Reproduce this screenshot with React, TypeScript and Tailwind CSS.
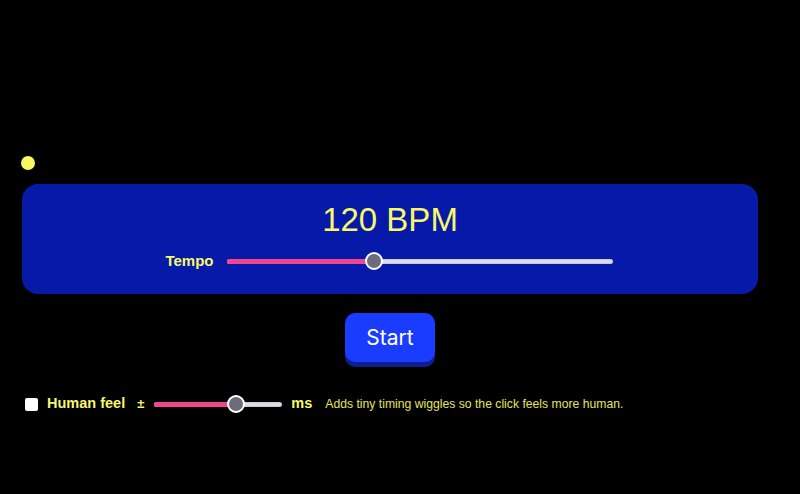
import { useState } from "react"

const yellow = "text-[#f8f86a]"

function Slider({ width, value, min, max }: { width: number; value: number; min: number; max: number }) {
  const pct = (value - min) / (max - min)
  const thumb = 18
  const left = pct * (width - thumb)
  return (
    <div role="slider" aria-valuenow={value} className="relative h-5 flex items-center" style={{ width }}>
      <div className="w-full h-[5px] rounded-full bg-[#dcdce4] border border-[#a9a9c0]/40" />
      <div className="absolute left-0 h-[5px] rounded-full bg-[#f0468f]" style={{ width: left + thumb / 2 }} />
      <div
        className="absolute top-px w-[18px] h-[18px] rounded-full bg-[#6c6c7c] border-2 border-white"
        style={{ left }}
      />
    </div>
  )
}

export default function App() {
  const [bpm] = useState(120)
  const [human, setHuman] = useState(false)

  return (
    <div className="w-[800px] h-[494px] bg-black overflow-hidden pt-[156px] pl-[22px] font-['Liberation_Sans',Arial,sans-serif]">
      {/* beat light */}
      <div className="w-[14px] h-[14px] rounded-full bg-[#f8f860] -ml-px" />

      {/* Tempo panel */}
      <div className="mt-[14px] w-[736px] h-[110px] rounded-2xl bg-[#0619a8] flex flex-col items-center pt-[17px]">
        <h1 className={`text-[33px] leading-[38px] ${yellow}`}>{bpm} BPM</h1>
        <div className="mt-[11px] flex items-center gap-[13px] -ml-[2px]">
          <span className={`text-[15px] font-bold ${yellow}`}>Tempo</span>
          <Slider width={386} value={bpm} min={40} max={252} />
        </div>
      </div>

      {/* Start */}
      <div className="w-[736px] flex justify-center mt-[19px]">
        <button className="w-[90px] h-[49px] rounded-[10px] bg-[#1a3cff] text-white text-[21px] font-['Inter',sans-serif] shadow-[0_5px_0_#0d1f8e]">
          Start
        </button>
      </div>

      {/* Human feel */}
      <div className="mt-[32px] flex items-center h-5 ml-[3px]">
        <button
          onClick={() => setHuman(!human)}
          className="w-[13px] h-[13px] rounded-[2px] bg-white shrink-0"
          aria-checked={human}
          role="checkbox"
        />
        <span className={`ml-[9px] text-[14.5px] font-bold ${yellow}`}>Human feel</span>
        <span className={`ml-[12px] text-[13px] font-bold ${yellow}`}>±</span>
        <div className="ml-[10px]">
          <Slider width={128} value={66} min={0} max={100} />
        </div>
        <span className={`ml-[9px] text-[14.5px] font-bold ${yellow}`}>ms</span>
        <span className="ml-[13px] text-[12.2px] text-[#e4e45a]">Adds tiny timing wiggles so the click feels more human.</span>
      </div>
    </div>
  )
}
